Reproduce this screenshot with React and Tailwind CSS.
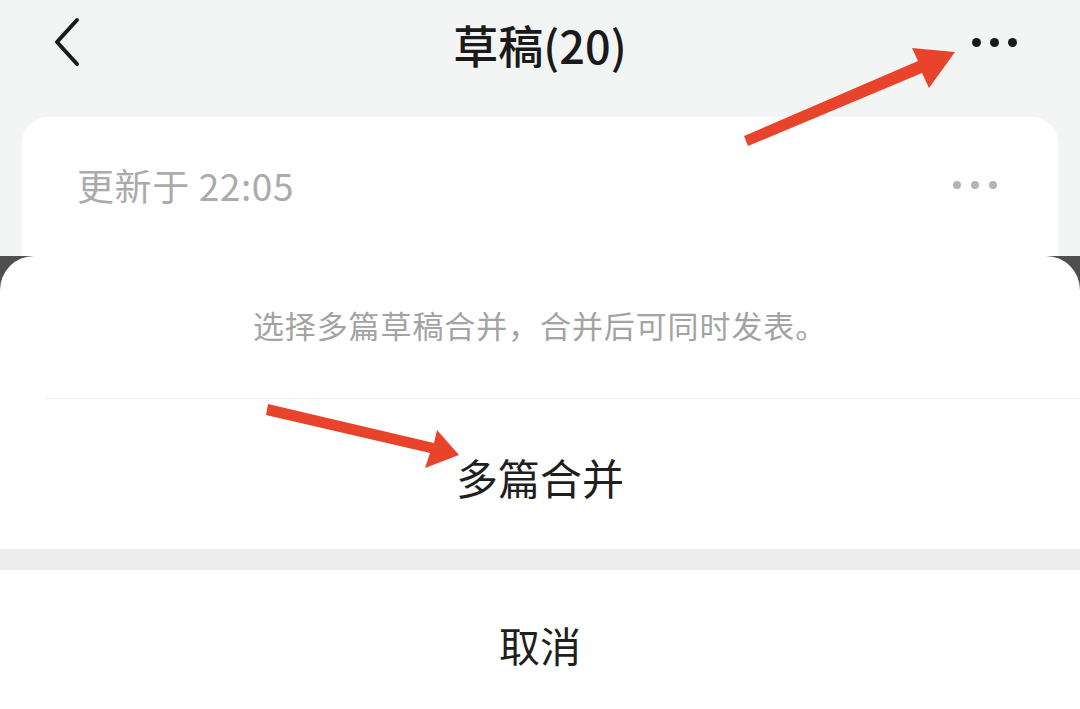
import React from "react";

const font = { fontFamily: '"Noto Sans CJK SC", "Noto Sans", sans-serif' };

function Dots({ color, size, gap }) {
  return (
    <div className={`flex items-center ${gap}`}>
      <span className={`${size} rounded-full ${color}`}></span>
      <span className={`${size} rounded-full ${color}`}></span>
      <span className={`${size} rounded-full ${color}`}></span>
    </div>
  );
}

export default function App() {
  return (
    <div className="relative w-[1080px] h-[709px] overflow-hidden bg-white" style={font}>
      {/* Top: header + draft card */}
      <div className="bg-[#f3f5f4] h-[256px] flex flex-col">
        <div className="relative h-[88px] flex items-center justify-center">
          <svg className="absolute left-[50px] top-[16px]" width="36" height="52" viewBox="0 0 36 52">
            <path d="M27 4 L7 26 L27 48" fill="none" stroke="#1a1a1a" strokeWidth="4" strokeLinecap="round" strokeLinejoin="round" />
          </svg>
          <h1 className="text-[45px] font-medium text-[#1a1a1a] tracking-[0px] leading-none">草稿(20)</h1>
          <div className="absolute right-[63px] top-[38px]">
            <Dots color="bg-[#1a1a1a]" size="w-[9px] h-[9px]" gap="gap-[9px]" />
          </div>
        </div>
        <div className="px-[22px] pt-[29px] flex-1">
          <div className="bg-white rounded-t-[26px] h-full pl-[55px] pr-[61px] pt-[46px] flex justify-between">
            <span className="text-[37px] leading-[44px] text-[#ababab] tracking-[0.6px]">更新于 22:05</span>
            <div className="pt-[18px]">
              <Dots color="bg-[#b5b5b5]" size="w-[8px] h-[8px]" gap="gap-[10px]" />
            </div>
          </div>
        </div>
      </div>

      {/* Action sheet */}
      <div className="bg-[#4f4f4f]">
        <div className="bg-white rounded-t-[34px]">
          <div className="h-[142px] flex items-center justify-center pb-[4px]">
            <p className="text-[31px] text-[#a3a3a3] tracking-[0.9px]">选择多篇草稿合并，合并后可同时发表。</p>
          </div>
          <div className="ml-[45px] h-[1px] bg-[#ededed]"></div>
          <div className="h-[150px] flex items-center justify-center pt-[4px]">
            <span className="text-[42px] text-[#1f1f1f]">多篇合并</span>
          </div>
          <div className="h-[21px] bg-[#ededed]"></div>
          <div className="h-[150px] flex items-center justify-center pb-[1px]">
            <span className="text-[41px] text-[#1f1f1f]">取消</span>
          </div>
        </div>
      </div>

      {/* Annotation arrows */}
      <svg className="absolute inset-0 pointer-events-none" width="1080" height="709" viewBox="0 0 1080 709">
        <g fill="#e8442b">
          <path d="M744 136 L748 146 L922 73 L929 88 L955 52 L912 48 L918 61 Z" />
          <path d="M268 404 L266 415 L430 453 L425 468 L459 455 L437 430 L434 443 Z" />
        </g>
      </svg>
    </div>
  );
}
